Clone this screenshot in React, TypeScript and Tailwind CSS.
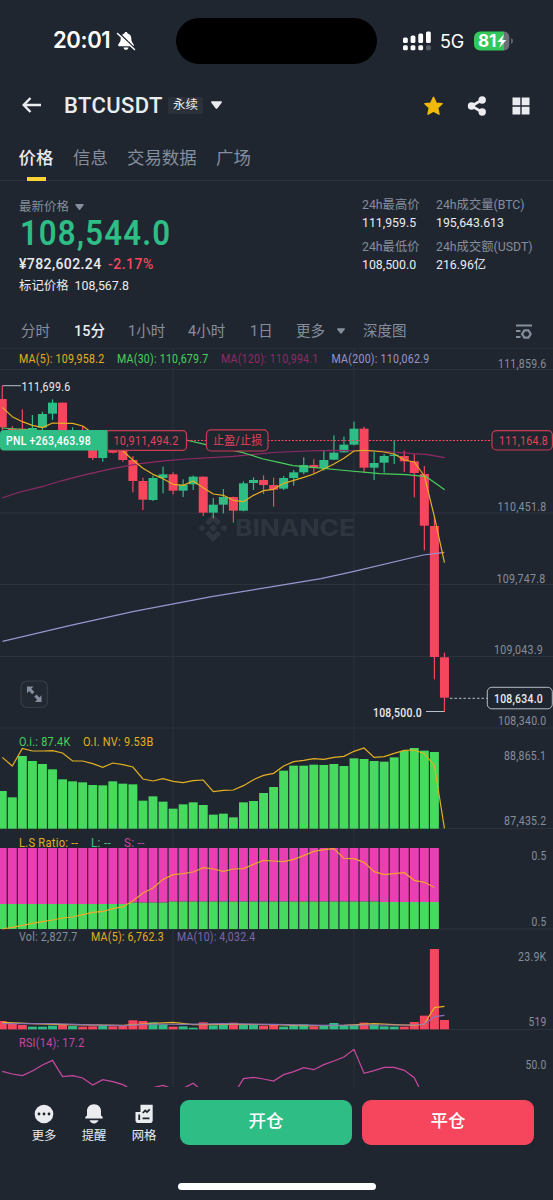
import { type ReactNode } from 'react';

const UP = '#2ebd85';
const DOWN = '#f6465d';
const BG = '#202630';
const GRID = '#2c323c';
const MUTED = '#848e9c';
const GOLD = '#e2b021';

// body top, body bottom, wick top, wick bottom, rising
type Candle = [number, number, number, number, 0 | 1];

const candles: Candle[] = [
  [147, 232, 107, 240, 0],
  [236, 244, 228, 246, 0],
  [236, 246, 178, 248, 0],
  [234, 246, 195, 248, 1],
  [192, 233, 185, 240, 1],
  [158, 191, 148, 210, 1],
  [158, 250, 158, 252, 0],
  [242, 252, 232, 256, 1],
  [244, 280, 228, 284, 0],
  [280, 324, 276, 330, 0],
  [290, 324, 280, 335, 1],
  [290, 308, 285, 310, 0],
  [298, 330, 298, 335, 0],
  [330, 393, 318, 427, 0],
  [393, 449, 383, 480, 0],
  [384, 450, 377, 453, 1],
  [373, 384, 350, 430, 1],
  [373, 422, 367, 433, 0],
  [404, 422, 388, 441, 1],
  [380, 403, 377, 420, 1],
  [380, 488, 380, 498, 0],
  [464, 488, 444, 505, 1],
  [441, 464, 417, 490, 1],
  [441, 482, 440, 518, 0],
  [400, 482, 394, 484, 1],
  [390, 399, 382, 420, 1],
  [390, 405, 376, 432, 0],
  [405, 419, 383, 470, 0],
  [384, 416, 378, 420, 1],
  [367, 384, 360, 407, 1],
  [345, 367, 322, 373, 1],
  [345, 354, 328, 372, 0],
  [330, 355, 302, 362, 1],
  [308, 329, 256, 330, 1],
  [284, 307, 260, 308, 1],
  [236, 284, 215, 286, 1],
  [236, 353, 230, 368, 0],
  [339, 353, 305, 390, 1],
  [318, 338, 312, 368, 1],
  [314, 318, 272, 342, 1],
  [318, 334, 302, 366, 0],
  [334, 369, 312, 442, 0],
  [372, 527, 348, 601, 0],
  [528, 921, 500, 988, 0],
  [922, 1043, 908, 1086, 0],
];

const ma5 = [
  172, 200, 215, 226, 233, 219, 220, 220, 228, 250, 270, 285, 303, 330, 355, 373, 386, 403, 406, 393, 413, 432, 436,
  451, 455, 436, 422, 418, 400, 391, 382, 372, 357, 342, 325, 303, 301, 303, 306, 312, 330, 336, 378, 500, 638,
];

const openInterest = [
  183, 202, 78, 93, 102, 118, 148, 154, 157, 165, 166, 154, 161, 163, 212, 199, 215, 236, 223, 217, 225, 254, 251, 262,
  217, 213, 189, 171, 122, 107, 107, 104, 105, 102, 108, 85, 87, 93, 95, 82, 63, 54, 62, 66,
];

const oiValue = [
  82, 108, 55, 63, 63, 62, 69, 93, 93, 101, 112, 99, 104, 111, 147, 153, 146, 154, 158, 152, 150, 185, 181, 180, 167,
  149, 136, 130, 108, 95, 91, 86, 88, 82, 79, 64, 54, 82, 80, 70, 61, 60, 71, 107, 295,
];

const ratioLine = [
  597, 592, 586, 580, 575, 570, 564, 561, 554, 547, 544, 536, 530, 513, 489, 474, 448, 434, 431, 426, 413, 417, 424, 417,
  416, 403, 391, 393, 395, 388, 377, 364, 359, 356, 385, 386, 397, 425, 434, 431, 428, 451, 457, 472,
];

const volumes = [
  288, 296, 300, 305, 305, 302, 300, 303, 305, 304, 301, 304, 303, 286, 288, 292, 298, 305, 304, 308, 292, 301, 300, 293,
  298, 300, 302, 300, 305, 300, 298, 304, 302, 294, 303, 300, 293, 298, 304, 305, 305, 291, 272, 72, 285,
];

const volMa5: [number, number][] = [
  [0, 292], [3, 296], [6, 299], [12, 301], [15, 295], [17, 292], [19, 299], [23, 298], [27, 299], [30, 302],
  [34, 301], [37, 296], [39, 299], [41, 301], [42, 297], [43, 248], [44, 244],
];

const volMa10: [number, number][] = [
  [0, 296], [5, 296], [8, 299], [12, 302], [15, 297], [18, 298], [22, 296], [27, 298], [32, 301], [37, 300],
  [41, 300], [42, 297], [43, 275], [44, 271],
];

const rsi: [number, number][] = [
  [0, 439], [1, 447], [2, 452], [3, 438], [4, 420], [5, 406], [6, 455], [7, 452], [8, 459], [9, 480], [10, 464],
  [11, 470], [12, 479], [13, 496], [15, 488], [16, 481], [17, 492], [18, 490], [19, 475], [20, 500], [23, 510],
  [24, 461], [25, 457], [26, 462], [27, 468], [28, 449], [29, 440], [30, 428], [31, 434], [32, 419], [33, 408],
  [34, 396], [35, 373], [36, 445], [37, 437], [38, 427], [39, 427], [40, 436], [41, 458], [42, 520],
];

const cx = (i: number) => 2.25 + i * 10.05;
const pane = (top: number) => (v: number) => top + v / 3;
const priceY = pane(350);
const oiY = pane(730);
const volY = pane(925);

const line = (data: number[], y: (v: number) => number) => data.map((v, i) => `${cx(i)},${y(v)}`).join(' ');
const sparse = (data: [number, number][], y: (v: number) => number) =>
  data.map(([i, v]) => `${cx(i)},${y(v)}`).join(' ');

const ratioSplit = (i: number) => (i < 13 ? 904 : i < 17 ? 902.6 : i > 37 ? 902 : 901.6);

interface LabelProps {
  x: number;
  y: number;
  w: number;
  fill?: string;
  size?: number;
  weight?: number;
  children: string;
}

// x is the left edge, y the middle of the capitals
function Label({ x, y, w, fill = MUTED, size = 12.4, weight = 400, children }: LabelProps) {
  return (
    <text
      x={x}
      y={y + size * 0.34}
      textLength={w}
      lengthAdjust="spacingAndGlyphs"
      fontSize={size}
      fontWeight={weight}
      letterSpacing="0.3"
      fill={fill}
    >
      {children}
    </text>
  );
}

function Caret({ className }: { className: string }) {
  return (
    <svg viewBox="0 0 10 7" className={className} fill="currentColor">
      <path d="M1 0h8c.9 0 1.3.9.7 1.5L5.7 6.6c-.4.5-1 .5-1.4 0L.3 1.5C-.3.9.1 0 1 0z" />
    </svg>
  );
}

function StatusBar() {
  return (
    <div className="flex h-[81px] items-center">
      <div className="ml-[53px] w-[60px] origin-left scale-x-[0.98] whitespace-nowrap font-['Inter'] text-[22.500px] font-semibold leading-none tracking-[-0.4px] text-white">
        20:01
      </div>
      <svg viewBox="0 0 20 20" className="ml-[3px] h-5 w-5" fill="#fff">
        <path d="M10 1c.9 0 1.5.6 1.6 1.4C14 3 15.300 5 15.300 7.500c0 4.500 2.500 4.800 2.500 6.800 0 .6-.4 1-1 1H3.200c-.6 0-1-.4-1-1 0-2 2.500-2.300 2.500-6.800C4.700 5 6 3 8.400 2.400 8.500 1.600 9.100 1 10 1zM7.500 16.500h5c-.2 1.400-1.200 2.300-2.500 2.300s-2.300-.9-2.500-2.300z" />
        <path d="M2.500 1.500L19 17.500" stroke={BG} strokeWidth="1.600" />
        <path d="M1.500 2.500L18.500 18.500" stroke="#fff" strokeWidth="1.500" strokeLinecap="round" />
      </svg>
      <div className="ml-[40px] h-[46px] w-[201px] rounded-full bg-black" />
      <svg viewBox="0 0 28 20" className="ml-[26px] h-5 w-7" fill="#fff">
        <rect x="0" y="6.500" width="4.800" height="5.500" rx="1.500" />
        <rect x="7.600" y="4.500" width="4.800" height="7.500" rx="1.500" />
        <rect x="15.300" y="2.500" width="4.800" height="9.500" rx="1.500" />
        <rect x="23" y="0.500" width="4.800" height="11.500" rx="1.500" />
        <rect x="0" y="14.300" width="4.800" height="5" rx="1.500" />
        <rect x="7.600" y="14.300" width="4.800" height="5" rx="1.500" />
        <rect x="15.300" y="14.300" width="4.800" height="5" rx="1.500" />
        <rect x="23" y="14.300" width="4.800" height="5" rx="1.500" opacity=".25" />
      </svg>
      <div className="ml-[9px] w-[25px] pt-[2px] font-['Inter'] text-[18px] leading-none tracking-[-0.3px] text-white">
        5G
      </div>
      <svg viewBox="0 0 40 20" className="ml-[9px] h-5 w-10">
        <path d="M6 .5h24v19H6a6 6 0 0 1-6-6v-7a6 6 0 0 1 6-6z" fill="#34c759" />
        <path d="M30 .5a5.500 5.500 0 0 1 5.300 6v7a5.500 5.500 0 0 1-5.300 6z" fill="#6a6e76" />
        <path d="M37 7c1.500.5 2 1.500 2 3s-.5 2.500-2 3z" fill="#5d626b" />
        <text x="4" y="16" textLength="18.500" lengthAdjust="spacingAndGlyphs" fontFamily="Inter" fontSize="17" fontWeight="700" fill="#fff">
          81
        </text>
        <path d="M30 3.200L23.300 10.900h3.900L25.200 17 32.300 9h-4.200z" fill="#fff" />
      </svg>
    </div>
  );
}

function TitleBar() {
  return (
    <div className="flex h-[48px] items-center text-[#eaecef]">
      <svg viewBox="0 0 20 16" className="ml-[22px] h-4 w-5" fill="none" stroke="currentColor" strokeWidth="2.400">
        <path d="M8.500 1L1.700 8l6.800 7M2 8h17" />
      </svg>
      <h1 className="ml-[22px] w-[98px] whitespace-nowrap pt-[2px] text-[22px] font-medium leading-none tracking-[0.4px]">
        BTCUSDT
      </h1>
      <span className="ml-[6px] flex h-[17px] w-[35px] items-center justify-center rounded-[2px] bg-[#2b313b] text-[12.500px] leading-none">
        永续
      </span>
      <Caret className="ml-[8px] h-[8px] w-[11px]" />
      <svg viewBox="0 0 20 20" className="ml-[201px] mt-px h-5 w-5" fill="#f0b90b">
        <path
          d="M10.500 1.300l2.700 5.800 5.900.6-4.400 4 1.300 6.500-5.500-3.100-5.500 3.100 1.300-6.500-4.400-4 5.900-.6z"
          stroke="#f0b90b"
          strokeWidth="1.400"
          strokeLinejoin="round"
        />
      </svg>
      <svg viewBox="0 0 20 20" className="ml-[24px] mt-px h-5 w-5" fill="currentColor">
        <circle cx="4.500" cy="10" r="3.700" />
        <circle cx="15.200" cy="4" r="3.700" />
        <circle cx="15.200" cy="16" r="3.700" />
        <path d="M15 4L4.500 10 15 16" fill="none" stroke="currentColor" strokeWidth="2.600" />
      </svg>
      <svg viewBox="0 0 18 18" className="ml-[25px] mt-px h-[18px] w-[18px]" fill="currentColor">
        <path d="M.5.5h7.800v7.800H.5zM9.700.5h7.800v7.800H9.700zM.5 9.700h7.800v7.800H.5zM9.700 9.700h7.800v7.800H9.700z" />
      </svg>
    </div>
  );
}

function Tabs() {
  return (
    <nav className="flex h-[52px] gap-[20px] border-b border-[#2c323c] pl-[19px] pt-[19px] text-[17.400px] leading-[20px] text-[#848e9c]">
      <div className="flex w-[34px] flex-col items-center whitespace-nowrap font-medium text-[#eaecef]">
        价格
        <div className="mt-[9px] h-[4px] w-[19px] shrink-0 bg-[#fcd535]" />
      </div>
      <div className="w-[34px] whitespace-nowrap">信息</div>
      <div className="w-[69px] whitespace-nowrap">交易数据</div>
      <div className="whitespace-nowrap">广场</div>
    </nav>
  );
}

function Stat({ label, value }: { label: string; value: string }) {
  return (
    <div className="whitespace-nowrap text-[12.300px] leading-[18px]">
      <div className="text-[#848e9c]">{label}</div>
      <div className="text-[#eaecef]">{value}</div>
    </div>
  );
}

function PriceSummary() {
  return (
    <div className="flex h-[132px] pl-[19px]">
      <div className="w-[343px] pt-[17px]">
        <div className="flex h-[18px] items-center text-[12.500px] leading-none text-[#848e9c]">
          最新价格
          <Caret className="ml-[6px] h-[6px] w-[9px]" />
        </div>
        <div className="h-[36px] w-[180px] origin-left scale-x-[0.88] whitespace-nowrap pl-px text-[35.500px] font-semibold leading-[34px] tracking-[1.3px] text-[#2ebd85]">
          108,544.0
        </div>
        <div className="flex h-[24px] items-center gap-[6px] text-[14px] font-medium leading-none">
          <span className="w-[83px] tracking-[0.4px] text-[#eaecef]">¥782,602.24</span>
          <span className="tracking-[0.5px] text-[#f6465d]">-2.17%</span>
        </div>
        <div className="flex h-[20px] items-center gap-[6px] text-[12.400px] leading-none text-[#eaecef]">
          <span>标记价格</span>
          <span>108,567.8</span>
        </div>
      </div>
      <div className="grid h-[80px] grid-cols-[74px_110px] grid-rows-[41.500px_36px] pt-[15px]">
        <Stat label="24h最高价" value="111,959.5" />
        <Stat label="24h成交量(BTC)" value="195,643.613" />
        <Stat label="24h最低价" value="108,500.0" />
        <Stat label="24h成交额(USDT)" value="216.96亿" />
      </div>
    </div>
  );
}

function IntervalBar() {
  return (
    <div className="flex h-[36px] items-center whitespace-nowrap border-b border-[#272d37] pl-[21px] pt-[3px] text-[14.500px] leading-none text-[#848e9c]">
      <span className="w-[53px]">分时</span>
      <span className="w-[54px] font-medium text-[#eaecef]">15分</span>
      <span className="w-[60px]">1小时</span>
      <span className="w-[62px]">4小时</span>
      <span className="w-[46px]">1日</span>
      <span className="w-[41px]">更多</span>
      <Caret className="mb-[2px] h-[6px] w-[8px]" />
      <span className="ml-[18px] w-[153px]">深度图</span>
      <svg viewBox="0 0 16 16" className="h-4 w-4" fill="none" stroke="currentColor" strokeWidth="2">
        <path d="M0 1.500h16M0 7h4.500M0 13h4.500" />
        <path d="M8.400 6.300h4l2.300 3.700-2.300 3.700h-4L6.100 10z" strokeWidth="2.200" />
      </svg>
    </div>
  );
}

function PricePane() {
  return (
    <g>
      <g fill="#2f353f" stroke="none">
        <path d="M213 514l8 8-3.500 3.500-4.500-4.500-4.500 4.500L205 522zM213 542l8-8-3.500-3.500-4.500 4.500-4.500-4.500-3.500 3.500zM213 524l4 4-4 4-4-4zM202 524.500l3.500 3.500-3.500 3.500-3.500-3.500zM224 524.500l3.500 3.500-3.500 3.500-3.500-3.500z" />
        <text x="235" y="536" textLength="120" lengthAdjust="spacingAndGlyphs" fontFamily="Inter" fontSize="23" fontWeight="700">
          BINANCE
        </text>
      </g>
      {candles.map(([top, bottom, high, low, up], i) => (
        <g key={i} fill={up ? UP : DOWN}>
          <rect x={cx(i) - 0.6} y={priceY(high)} width="1.200" height={(low - high) / 3} />
          <rect x={cx(i) - 4.5} y={priceY(top)} width="9" height={(bottom - top) / 3} />
        </g>
      ))}
      <g fill="none" strokeWidth="1.200" strokeLinejoin="round">
        <path
          d="M2 498L20 492 43.300 486.300 63.300 480.300 86.700 474.300 113.300 468.300 140 463.700 166.700 460.700 186.700 459 233.300 456.300 273 452.500 306 451 333 450.400 380 451 413 453.700 426 454.300 444.700 457.700"
          stroke="#8f2a66"
        />
        <path
          d="M2 428L32 430 100 433 160 438 186 440 206 444.700 243.300 452.700 263.300 459 280 462.700 293 465.700 313 467.300 339.700 470 379.700 473.700 406.300 474.700 426.300 476.700 444.700 489.700"
          stroke="#48d05c"
        />
        <path
          d="M2.500 641.300L70.500 625.300 134 611.300 211.600 596.700 268 587.300 321 578.700 354 571.300 423.300 555 444.400 552.300"
          stroke="#9a94cf"
        />
        <polyline points={line(ma5, priceY)} stroke={GOLD} />
      </g>

      <path d="M2.500 385.700H21M426 711.500h18.500" stroke="#b7bdc6" />
      <Label x={21.5} y={386.500} w={49} fill="#eaecef">111,699.6</Label>
      <Label x={373} y={712.500} w={49} fill="#eaecef" weight={500}>108,500.0</Label>
      <path d="M450 698.300h37" stroke="#b7bdc6" strokeDasharray="2.500 2" />

      <path d="M187 440.500h305" stroke={DOWN} strokeWidth="1.200" strokeDasharray="2 1.500" />
      <path d="M4 430h103v20.500H4a4 4 0 0 1-4-4V434a4 4 0 0 1 4-4z" fill={UP} />
      <Label x={6} y={441} w={85} fill="#fff" weight={500}>PNL +263,463.98</Label>
      <g fill={BG} stroke="#c93d52" strokeWidth="1.200">
        <path d="M107.500 430.600h75a4 4 0 0 1 4 4v11.800a4 4 0 0 1-4 4h-75z" />
        <rect x="206.500" y="429.800" width="61.500" height="21.200" rx="4.500" />
        <rect x="492" y="430.600" width="60.400" height="19.400" rx="4.500" />
      </g>
      <Label x={113.500} y={441} w={65} fill="#e0435a">10,911,494.2</Label>
      <Label x={213} y={441} w={49.500} fill="#e0435a" size={12}>止盈/止损</Label>
      <Label x={499} y={441} w={49} fill="#e0435a">111,164.8</Label>
      <rect x="487.300" y="687.300" width="65" height="21.500" rx="4.500" fill={BG} stroke="#b7bdc6" />
      <Label x={494} y={699} w={49} fill="#eaecef" weight={500}>108,634.0</Label>

      <rect x="21" y="681" width="26.500" height="26.500" rx="6" fill="#232933" stroke="#363c47" strokeWidth="1.200" />
      <path
        d="M27 686.500h6.500l-2.200 2.200 3.200 3.200-2.400 2.400-3-3.200-2.100 2.100zM41.500 702H35l2.200-2.200-3-3 2.400-2.400 2.800 3 2.100-2.100z"
        fill="#848e9c"
      />
    </g>
  );
}

function Chart() {
  return (
    <svg viewBox="0 349 553 738" className="block h-[738px] w-[553px] overflow-hidden">
      <path
        d="M0 369.500h553M0 513h553M0 584.500h553M0 656.500h553M0 728h553M0 828.500h553M0 929h553M0 1029.500h553M173 349v738M354 349v738"
        stroke={GRID}
        fill="none"
      />
      <PricePane />

      {openInterest.map((v, i) => (
        <rect key={i} x={cx(i) - 4.45} y={oiY(v)} width="8.900" height={(296 - v) / 3} fill="#46db5f" />
      ))}
      <polyline points={line(oiValue, oiY)} fill="none" stroke={GOLD} strokeWidth="1.200" />

      {ratioLine.map((_, i) => (
        <g key={i}>
          <rect x={cx(i) - 4.45} y="848" width="8.900" height={ratioSplit(i) - 848} fill="#ea3eb3" />
          <rect x={cx(i) - 4.45} y={ratioSplit(i)} width="8.900" height={929 - ratioSplit(i)} fill="#46db5f" />
        </g>
      ))}
      <polyline points={line(ratioLine, oiY)} fill="none" stroke="#f5a52a" strokeWidth="1.200" />

      {volumes.map((v, i) => (
        <rect key={i} x={cx(i) - 4.5} y={volY(v)} width="9" height={(313 - v) / 3} fill={candles[i][4] ? UP : DOWN} />
      ))}
      <polyline points={sparse(volMa5, volY)} fill="none" stroke={GOLD} strokeWidth="1.200" />
      <polyline points={sparse(volMa10, volY)} fill="none" stroke="#8d74b8" strokeWidth="1.200" />
      <polyline points={sparse(rsi, volY)} fill="none" stroke="#c848a0" strokeWidth="1.200" />

      <Label x={19} y={359} w={85.500} fill={GOLD}>MA(5): 109,958.2</Label>
      <Label x={117} y={359} w={91.500} fill="#48d05c">MA(30): 110,679.7</Label>
      <Label x={221} y={359} w={97.500} fill="#8f2a66">MA(120): 110,994.1</Label>
      <Label x={331.500} y={359} w={98} fill="#9a94cf">MA(200): 110,062.9</Label>

      <Label x={19} y={742} w={51.500} fill="#48d05c">O.i.: 87.4K</Label>
      <Label x={83} y={742} w={70.500} fill={GOLD}>O.I. NV: 9.53B</Label>
      <Label x={19} y={842.300} w={59} fill={GOLD}>L.S Ratio: --</Label>
      <Label x={91} y={842.300} w={20} fill="#3fc47e">L: --</Label>
      <Label x={124} y={842.300} w={20.500} fill="#c848a0">S: --</Label>
      <Label x={19} y={936.700} w={58.500}>Vol: 2,827.7</Label>
      <Label x={91} y={936.700} w={73} fill={GOLD}>MA(5): 6,762.3</Label>
      <Label x={177} y={936.700} w={78.500} fill="#7b66ad">MA(10): 4,032.4</Label>
      <Label x={19} y={1043} w={65.500} fill="#c848a0">RSI(14): 17.2</Label>

      <Label x={498} y={364} w={48.500}>111,859.6</Label>
      <Label x={497.500} y={507} w={49}>110,451.8</Label>
      <Label x={496.500} y={578.300} w={49}>109,747.8</Label>
      <Label x={494} y={650} w={49}>109,043.9</Label>
      <Label x={498} y={720.500} w={48.500}>108,340.0</Label>
      <Label x={504} y={756} w={42}>88,865.1</Label>
      <Label x={504} y={821} w={42.500}>87,435.2</Label>
      <Label x={531.500} y={856} w={15}>0.5</Label>
      <Label x={531.500} y={921.300} w={15}>0.5</Label>
      <Label x={518} y={956.500} w={28.500}>23.9K</Label>
      <Label x={528.500} y={1021.500} w={18}>519</Label>
      <Label x={525.500} y={1064.500} w={21}>50.0</Label>
    </svg>
  );
}

function Action({ label, children }: { label: string; children: ReactNode }) {
  return (
    <div className="flex w-[50px] flex-col items-center text-[12.300px] leading-none text-[#eaecef]">
      <svg viewBox="0 0 20 20" className="mb-[6px] h-5 w-5" fill="currentColor">
        {children}
      </svg>
      {label}
    </div>
  );
}

function BottomBar() {
  return (
    <div className="flex h-[113px] flex-col items-center justify-between pb-[10px] pt-[12.500px]">
      <div className="flex w-full items-start pl-[19px]">
        <div className="flex w-[161px] pt-[4.500px]">
          <Action label="更多">
            <circle cx="10" cy="10" r="9.300" />
            <g fill={BG}>
              <circle cx="5" cy="10" r="1.400" />
              <circle cx="10" cy="10" r="1.400" />
              <circle cx="15" cy="10" r="1.400" />
            </g>
          </Action>
          <Action label="提醒">
            <path d="M10 .3c4 0 7 2.800 7 6.700v4.500l1.700 1.500v1.500H1.300V13L3 11.500V7C3 3.100 6 .3 10 .3zM5.500 16.300h9c-.7 1.900-2.400 3.200-4.500 3.200s-3.800-1.300-4.500-3.200z" />
          </Action>
          <Action label="网格">
            <path d="M6.500.8h12.200v15.400a2.800 2.800 0 0 1-2.800 2.800H4.300a2.800 2.800 0 0 1-2.800-2.800V8h5z" />
            <path d="M8.800 9l2.400-2.500 1.800 1.600 2.700-2.800M8.500 14.400h7M5.200 10.500v5.500" fill="none" stroke={BG} strokeWidth="1.800" />
          </Action>
        </div>
        <button className="h-[45px] w-[172px] rounded-[9px] bg-[#2ebd85] text-[17.500px] font-medium leading-none text-white">
          <span>开仓</span>
        </button>
        <button className="ml-[10px] h-[45px] w-[172px] rounded-[9px] bg-[#f6465d] text-[17.500px] font-medium leading-none text-white">
          <span>平仓</span>
        </button>
      </div>
      <div className="h-[7px] w-[198px] rounded-full bg-white" />
    </div>
  );
}

export default function App() {
  return (
    <div className="h-[1200px] w-[553px] overflow-hidden bg-[#202630] font-['Roboto','Noto_Sans_CJK_SC',sans-serif]">
      <StatusBar />
      <TitleBar />
      <Tabs />
      <PriceSummary />
      <IntervalBar />
      <Chart />
      <BottomBar />
    </div>
  );
}
